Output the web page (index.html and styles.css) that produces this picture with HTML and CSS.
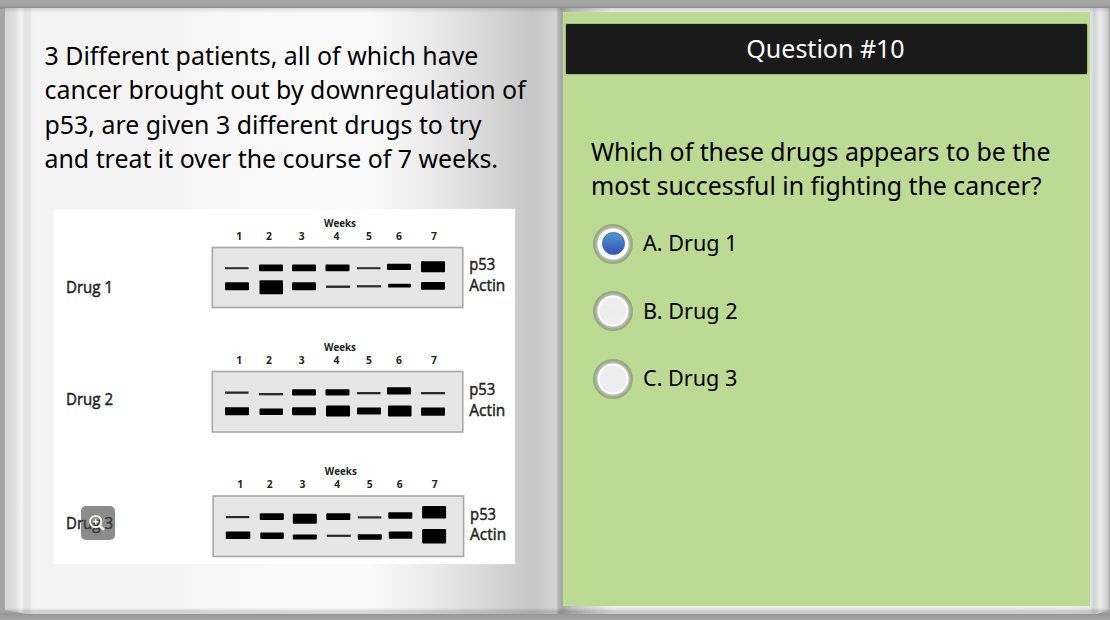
FILE: index.html
```
<!DOCTYPE html>
<html lang="en">
<head>
    <meta charset="UTF-8">
    <title>Question #10</title>
    <link rel="stylesheet" href="styles.css">
</head>
<body>

    <div class="book">
        <!-- Left page -->
        <div class="page-left">
            <p class="intro">3 Different patients, all of which have<br>cancer brought out by downregulation of<br>p53, are given 3 different drugs to try<br>and treat it over the course of 7 weeks.</p>

            <div class="figure">
                <svg class="blot" width="461" height="355" viewBox="0 0 461 355">
                    <!-- Drug 1 -->
                    <text class="drug" x="12" y="84" textLength="47" lengthAdjust="spacingAndGlyphs">Drug 1</text>
                    <g transform="translate(158 38)">
                        <text class="week" x="128" y="-20" textLength="32" lengthAdjust="spacingAndGlyphs">Weeks</text>
                        <g class="week">
                            <text x="27.3" y="-7">1</text><text x="57" y="-7">2</text><text x="89.7" y="-7">3</text><text x="124.5" y="-7">4</text><text x="157" y="-7">5</text><text x="187" y="-7">6</text><text x="222" y="-7">7</text>
                        </g>
                        <rect class="gel" x="0.3" y="0.5" width="250.5" height="60"/>
                        <g class="band">
                            <rect class="thin" x="13" y="20.2" width="23.5" height="2"/>
                            <rect x="47" y="17.4" width="24" height="6.8" rx="1"/>
                            <rect x="80" y="17.4" width="24" height="6.8" rx="1"/>
                            <rect x="113.5" y="17.4" width="24" height="6.8" rx="1"/>
                            <rect class="thin" x="145" y="20.2" width="23.5" height="2"/>
                            <rect x="175" y="16.8" width="24" height="6.2" rx="1"/>
                            <rect x="209" y="14.2" width="24" height="11" rx="1"/>
                            <rect x="13" y="35.3" width="24" height="8" rx="1"/>
                            <rect x="47.5" y="33.2" width="23.5" height="14" rx="1"/>
                            <rect x="80" y="35.3" width="24" height="8" rx="1"/>
                            <rect class="thin" x="114" y="38.5" width="24" height="2.4"/>
                            <rect class="thin" x="145" y="38.2" width="24" height="2.2"/>
                            <rect x="176" y="36.8" width="23" height="3.6" rx="1"/>
                            <rect x="209" y="35" width="24" height="7.8" rx="1"/>
                        </g>
                        <text class="row" x="257.3" y="23" textLength="26" lengthAdjust="spacingAndGlyphs">p53</text>
                        <text class="row" x="257.3" y="44" textLength="36" lengthAdjust="spacingAndGlyphs">Actin</text>
                    </g>

                    <!-- Drug 2 -->
                    <text class="drug" x="12" y="195.5" textLength="47" lengthAdjust="spacingAndGlyphs">Drug 2</text>
                    <g transform="translate(158 162)">
                        <text class="week" x="128" y="-20" textLength="32" lengthAdjust="spacingAndGlyphs">Weeks</text>
                        <g class="week">
                            <text x="27.3" y="-7">1</text><text x="57" y="-7">2</text><text x="89.7" y="-7">3</text><text x="124.5" y="-7">4</text><text x="157" y="-7">5</text><text x="187" y="-7">6</text><text x="222" y="-7">7</text>
                        </g>
                        <rect class="gel" x="0.3" y="0.5" width="250.5" height="60.5"/>
                        <g class="band">
                            <rect class="thin" x="13" y="20.5" width="23.5" height="2.3"/>
                            <rect class="thin" x="47" y="22" width="24" height="2.3"/>
                            <rect x="80" y="18.2" width="24" height="6.4" rx="1"/>
                            <rect x="113.5" y="18.2" width="24" height="6.4" rx="1"/>
                            <rect class="thin" x="145" y="21" width="23.5" height="2.3"/>
                            <rect x="175" y="16.2" width="24" height="7.4" rx="1"/>
                            <rect class="thin" x="209" y="21" width="24" height="2.3"/>
                            <rect x="13" y="36.2" width="24" height="8" rx="1"/>
                            <rect x="47.5" y="37.5" width="23.5" height="6.4" rx="1"/>
                            <rect x="80" y="36.2" width="24" height="8" rx="1"/>
                            <rect x="114" y="34.6" width="24" height="11" rx="1"/>
                            <rect x="145" y="36.6" width="24" height="7" rx="1"/>
                            <rect x="176" y="34.6" width="23.5" height="11" rx="1"/>
                            <rect x="209" y="36.4" width="24" height="8.4" rx="1"/>
                        </g>
                        <text class="row" x="257.3" y="24" textLength="26" lengthAdjust="spacingAndGlyphs">p53</text>
                        <text class="row" x="257.3" y="44.5" textLength="36" lengthAdjust="spacingAndGlyphs">Actin</text>
                    </g>

                    <!-- Drug 3 -->
                    <text class="drug" x="12" y="319.5" textLength="47" lengthAdjust="spacingAndGlyphs">Drug 3</text>
                    <g transform="translate(158.8 286.5)">
                        <text class="week" x="128" y="-20.5" textLength="32" lengthAdjust="spacingAndGlyphs">Weeks</text>
                        <g class="week">
                            <text x="27.3" y="-7.5">1</text><text x="57" y="-7.5">2</text><text x="89.7" y="-7.5">3</text><text x="124.5" y="-7.5">4</text><text x="157" y="-7.5">5</text><text x="187" y="-7.5">6</text><text x="222" y="-7.5">7</text>
                        </g>
                        <rect class="gel" x="0.3" y="0.5" width="250.5" height="60.5"/>
                        <g class="band">
                            <rect class="thin" x="13" y="20.5" width="23.5" height="2.2"/>
                            <rect x="47" y="17.8" width="24" height="6.6" rx="1"/>
                            <rect x="80" y="18.2" width="24" height="10" rx="1"/>
                            <rect x="113.5" y="17.8" width="24" height="6.6" rx="1"/>
                            <rect class="thin" x="145" y="20.8" width="23.5" height="2.2"/>
                            <rect x="175.5" y="16.8" width="24" height="6.4" rx="1"/>
                            <rect x="209.3" y="10.4" width="24" height="12.6" rx="1"/>
                            <rect x="13" y="36" width="24.5" height="7.6" rx="1"/>
                            <rect x="47.5" y="37" width="23.5" height="6.4" rx="1"/>
                            <rect x="80" y="38.9" width="24" height="5.2" rx="1"/>
                            <rect class="thin" x="114" y="39.2" width="24" height="2.2"/>
                            <rect x="145" y="38.7" width="24" height="5.6" rx="1"/>
                            <rect x="176" y="36" width="23.5" height="7.2" rx="1"/>
                            <rect x="209.3" y="33.4" width="24" height="14.6" rx="1"/>
                        </g>
                        <text class="row" x="257.3" y="24" textLength="26" lengthAdjust="spacingAndGlyphs">p53</text>
                        <text class="row" x="257.3" y="44.8" textLength="36" lengthAdjust="spacingAndGlyphs">Actin</text>
                    </g>
                </svg>

                <!-- Zoom button over the figure -->
                <button class="zoom-btn" aria-label="Zoom">
                    <svg width="18" height="18" viewBox="0 0 18 18">
                        <circle cx="7.7" cy="7.6" r="5.7" fill="none" stroke="#f3f6e6" stroke-width="2"/>
                        <path d="M7.7 4.8v5.6M4.9 7.6h5.6" stroke="#f3f6e6" stroke-width="1.6"/>
                        <path d="M11.8 11.7l4.2 4.2" stroke="#f3f6e6" stroke-width="2.6"/>
                    </svg>
                </button>
            </div>
        </div>

        <!-- Right page -->
        <div class="page-right">
            <div class="quiz">
                <h1 class="title">Question #10</h1>
                <p class="question">Which of these drugs appears to be the<br>most successful in fighting the cancer?</p>
                <div class="options">
                    <label class="option"><span class="radio checked"></span><span class="answer">A. Drug 1</span></label>
                    <label class="option"><span class="radio"></span><span class="answer">B. Drug 2</span></label>
                    <label class="option"><span class="radio"></span><span class="answer">C. Drug 3</span></label>
                </div>
            </div>
        </div>
    </div>

</body>
</html>
```
FILE: styles.css
```
* {
    box-sizing: border-box;
}
body {
    margin: 0;
    height: 620px;
    padding: 8px 1px 6px 5px;
    overflow: hidden;
    background: linear-gradient(#a6a6a6 0, #a2a2a2 5px, #8c8c8c 8px, #a5a5a5 9px, #a5a5a5 611px, #979797 614px, #a6a6a6 620px);
    color: #000;
    font-family: "Noto Sans", "Open Sans", sans-serif;
}
.book {
    display: flex;
    height: 606px;
    /* outer page edges curl up at the bottom */
    clip-path: polygon(0 0, 100% 0, 100% 602px, 1092px 606px, 22px 606px, 0 602px);
}
.page-left {
    width: 557px;
    padding: 30px 0 0 39.5px;
    background:
        linear-gradient(rgba(0,0,0,0.12) 0, rgba(0,0,0,0) 5px, rgba(0,0,0,0) 600px, rgba(0,0,0,0.14) 603px, rgba(0,0,0,0.14) 606px),
        linear-gradient(90deg, #d6d6d6 0, #dedede 10px, #f5f5f5 16px, #e2e2e2 20px, #e6e6e6 24px, #f4f4f4 28px, #f4f4f4 170px, #f8f8f8 220px, #fafafa 310px, #fafafa 365px, #eaeaea 427px, #d4d4d4 492px, #c6c6c6 527px, #d4d4d4 551px, #b0b0b0 554px, #a4a4a4 557px);
}
.intro {
    margin: 0;
    font-size: 24.9px;
    line-height: 34.3px;
    white-space: nowrap;
}
.figure {
    position: relative;
    width: 460.5px;
    height: 355.5px;
    margin: 33.8px 0 0 9.5px;
    background: #fff;
    box-shadow: 0 0 1px rgba(255, 255, 255, 0.8);
}
.blot {
    display: block;
    font-family: "Open Sans", sans-serif;
}
.drug, .row {
    font-size: 15.5px;
    fill: #222;
    stroke: #222;
    stroke-width: 0.45;
}
.week {
    font-size: 10.3px;
    font-weight: bold;
    text-anchor: middle;
    fill: #222;
}
.gel {
    fill: #e6e6e6;
    stroke: #a9a9a9;
    stroke-width: 1.6;
}
.band rect {
    fill: #000;
}
.band .thin {
    fill: #2a2a2a;
}
.zoom-btn {
    position: absolute;
    left: 27px;
    bottom: 24.5px;
    width: 34px;
    height: 34px;
    padding: 8px 7px;
    border: none;
    border-radius: 5px;
    background: rgba(70, 70, 70, 0.62);
}
.zoom-btn svg {
    display: block;
}
.page-right {
    flex: 1;
    padding: 4px 19px 8px 1px;
    background:
        linear-gradient(rgba(0,0,0,0.1) 0, rgba(0,0,0,0) 5px, rgba(0,0,0,0) 600px, rgba(0,0,0,0.14) 603px, rgba(0,0,0,0.14) 606px),
        linear-gradient(90deg, #a6a6a6 0, #c0c0c0 10px, #eee 50px, #eee 500px, #e6e6e6 528px, #d2d2d2 532px, #ececec 538px, #d8d8d8 543px, #c4c4c4 547px);
}
.quiz {
    height: 594px;
    padding: 12px 3px 0;
    background: #bcda94;
}
.title {
    height: 50px;
    margin: 0;
    padding-right: 2px;
    border-radius: 1px;
    background: #1a1a1a;
    box-shadow: 0 0 1px 1px rgba(0, 0, 0, 0.15);
    color: #fff;
    font-size: 25px;
    font-weight: normal;
    line-height: 48px;
    text-align: center;
}
.question {
    margin: 60px 0 0 25px;
    font-size: 24.85px;
    line-height: 34.3px;
    white-space: nowrap;
}
.options {
    display: flex;
    flex-direction: column;
    gap: 27.5px;
    margin: 21px 0 0 27px;
}
.option {
    display: flex;
    align-items: center;
    gap: 10px;
    height: 40px;
    font-size: 21.6px;
}
.answer {
    padding-bottom: 2px;
}
.radio {
    display: flex;
    align-items: center;
    justify-content: center;
    width: 40px;
    height: 40px;
    border: 2px solid #94b071;
    border-radius: 50%;
    background: radial-gradient(circle, #ececec 0, #eee 13px, #fff 14px, #fff 15px, #bebebe 16px, #a8a8a8 18px);
}
.radio.checked {
    background: radial-gradient(circle, #e0e0e0 0, #ececec 11px, #fff 13.5px, #fff 15px, #bebebe 16px, #a8a8a8 18px);
}
.radio.checked::before {
    content: "";
    width: 21px;
    height: 21px;
    border: 1px solid #426a9c;
    border-radius: 50%;
    background: linear-gradient(#4c9ad0, #3850b8);
}
```
